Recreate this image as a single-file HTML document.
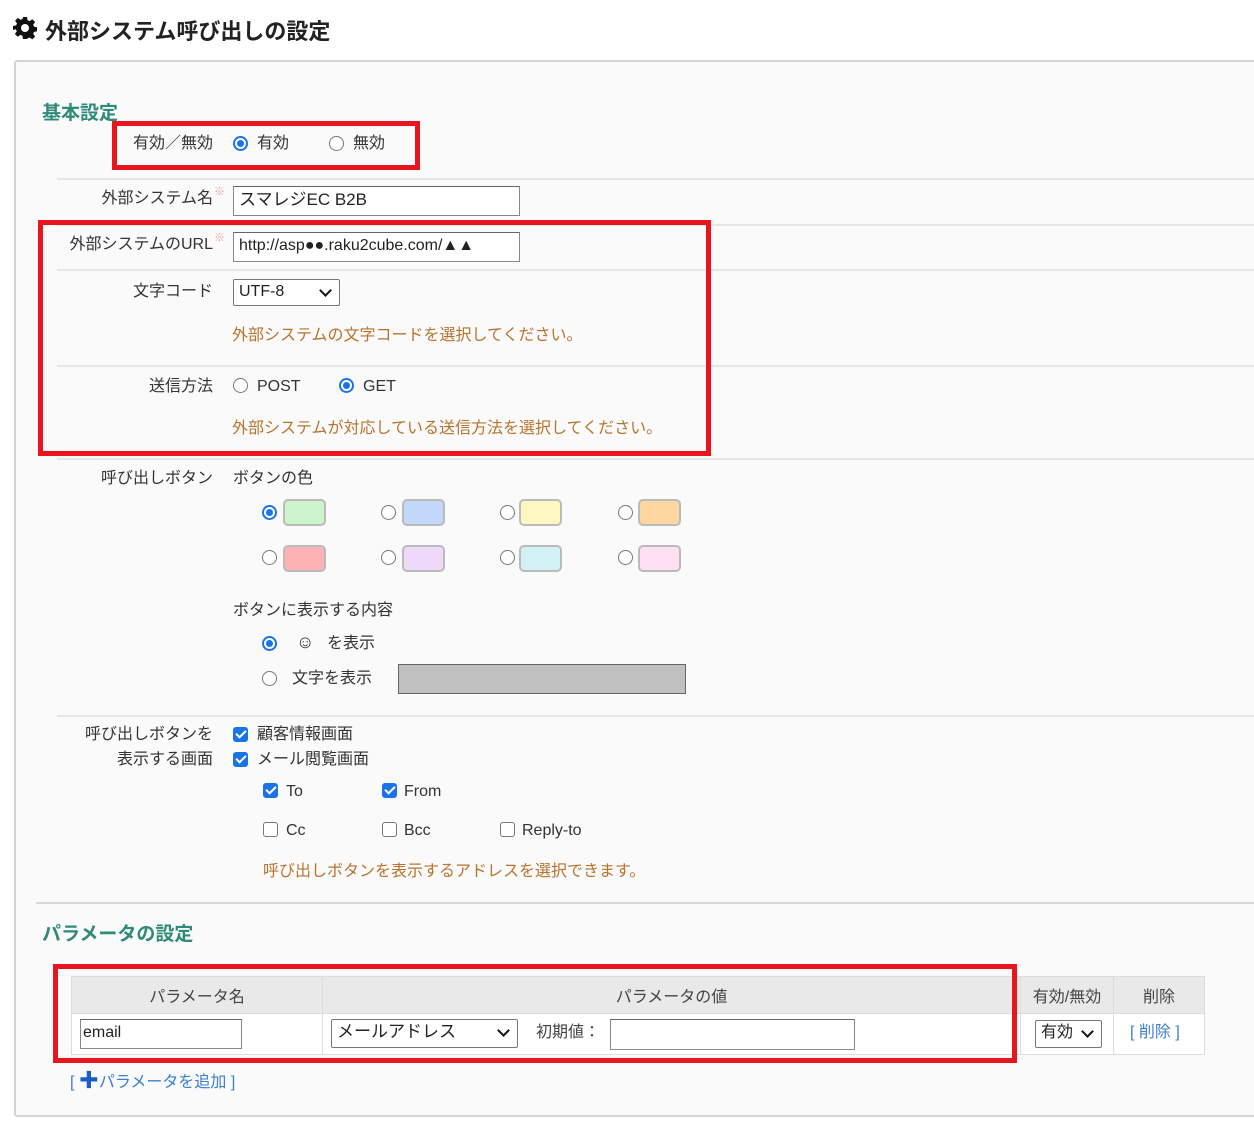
<!DOCTYPE html>
<html><head><meta charset="utf-8"><style>
*{box-sizing:border-box}
body{margin:0;width:1254px;height:1125px;background:#fff;font-family:"Liberation Sans","Noto Sans CJK JP",sans-serif;color:#333;position:relative;overflow:hidden}
.a{position:absolute;white-space:nowrap}
.t{font-size:16px;line-height:20px}
.lb{font-size:16px;line-height:20px;text-align:right;width:200px}
.hr{position:absolute;height:2px;background:#e6e6e6;left:57px;right:0}
.red{position:absolute;border:5px solid #e8141e}
.rad{position:absolute;width:15px;height:15px;border:1.5px solid #777;border-radius:50%;background:#fff}
.rad.on{border:2px solid #1a73e8}
.rad.on:after{content:"";position:absolute;left:2px;top:2px;width:7px;height:7px;border-radius:50%;background:#1a73e8}
.cb{position:absolute;width:15px;height:15px;border:1.5px solid #777;border-radius:3px;background:#fff}
.cb.on{background:#1a73e8;border-color:#1a73e8}
.cb.on:after{content:"";position:absolute;left:4px;top:0px;width:4px;height:8px;border:solid #fff;border-width:0 2px 2px 0;transform:rotate(45deg)}
.inp{position:absolute;background:#fff;border:1px solid #888;border-top-color:#666;font-size:17px;line-height:26px;padding-left:5px;color:#222}
.sel{position:absolute;background:#fff;border:1px solid #777;border-radius:2px;font-size:16px;line-height:24px;padding-left:5px;color:#222}
.sel:after{content:"";position:absolute;right:9px;top:6px;width:7px;height:7px;border:solid #111;border-width:0 2.5px 2.5px 0;transform:rotate(45deg)}
.sw{position:absolute;width:43px;height:27px;border:2px solid #bbb;border-radius:5px}
.or{color:#b8742e;font-size:16px}
.h2{color:#2e8b7a;font-weight:bold;font-size:19px}
table{position:absolute;border-collapse:collapse;left:71px;top:976px}
td,th{border:1px solid #dcdcdc;padding:0;font-size:16px;font-weight:normal;color:#444}
th{background:#e9e9e9;height:37px}
td{height:41px;background:#fff;position:relative}
.bl{color:#3b7fd0}
</style></head><body>
<svg class="a" style="left:13px;top:16px" width="24" height="24" viewBox="0 0 24 24"><path fill="#111" d="M10 1h4l.6 3.2 2 .9 2.7-1.9 2.8 2.8-1.9 2.7.9 2 3.2.6v4l-3.2.6-.9 2 1.9 2.7-2.8 2.8-2.7-1.9-2 .9L14 23h-4l-.6-3.2-2-.9-2.7 1.9-2.8-2.8 1.9-2.7-.9-2L-.1 14v-4l3.2-.6.9-2L2.1 4.7l2.8-2.8 2.7 1.9 2-.9z"/><circle cx="12" cy="12" r="4" fill="#fff"/></svg>
<div class="a" style="left:45px;top:14px;font-size:22px;font-weight:bold;color:#222">外部システム呼び出しの設定</div>

<div class="a" style="left:14px;top:60px;width:1250px;height:1057px;border:2px solid #d4d4d4;border-right:none;background:#fafafa;border-radius:3px"></div>

<div class="a h2" style="left:42px;top:98px">基本設定</div>
<div class="a lb" style="left:13px;top:134px">有効／無効</div>
<div class="rad on" style="left:233px;top:136px"></div><div class="a t" style="left:257px;top:134px">有効</div>
<div class="rad" style="left:329px;top:136px"></div><div class="a t" style="left:353px;top:134px">無効</div>
<div class="red" style="left:112px;top:121px;width:308px;height:49px"></div>

<div class="hr" style="top:178px"></div>
<div class="a lb" style="left:13px;top:189px">外部システム名</div><div class="a" style="left:214px;top:183px;font-size:11px;color:#e8a0a0">※</div>
<div class="inp" style="left:233px;top:186px;width:287px;height:30px">スマレジEC B2B</div>

<div class="hr" style="top:224px"></div>
<div class="a lb" style="left:13px;top:235px">外部システムのURL</div><div class="a" style="left:214px;top:229px;font-size:11px;color:#e8a0a0">※</div>
<div class="inp" style="left:233px;top:232px;width:287px;height:30px;overflow:hidden;font-size:16px">http://asp●●.raku2cube.com/▲▲</div>

<div class="hr" style="top:269px"></div>
<div class="a lb" style="left:13px;top:282px">文字コード</div>
<div class="sel" style="left:233px;top:279px;width:107px;height:27px">UTF-8</div>
<div class="a or" style="left:232px;top:321px">外部システムの文字コードを選択してください。</div>

<div class="hr" style="top:365px"></div>
<div class="a lb" style="left:13px;top:377px">送信方法</div>
<div class="rad" style="left:233px;top:378px"></div><div class="a t" style="left:257px;top:377px">POST</div>
<div class="rad on" style="left:339px;top:378px"></div><div class="a t" style="left:363px;top:377px">GET</div>
<div class="a or" style="left:232px;top:414px">外部システムが対応している送信方法を選択してください。</div>
<div class="red" style="left:38px;top:220px;width:673px;height:236px"></div>

<div class="hr" style="top:458px"></div>
<div class="a lb" style="left:13px;top:469px">呼び出しボタン</div>
<div class="a t" style="left:233px;top:469px">ボタンの色</div>
<div class="rad on" style="left:262px;top:505px"></div><div class="sw" style="left:283px;top:499px;background:#ccf5cc"></div>
<div class="rad" style="left:381px;top:505px"></div><div class="sw" style="left:402px;top:499px;background:#c2d8fb"></div>
<div class="rad" style="left:500px;top:505px"></div><div class="sw" style="left:519px;top:499px;background:#fff7c2"></div>
<div class="rad" style="left:618px;top:505px"></div><div class="sw" style="left:638px;top:499px;background:#fdd6a0"></div>
<div class="rad" style="left:262px;top:550px"></div><div class="sw" style="left:283px;top:545px;background:#fdb3b3"></div>
<div class="rad" style="left:381px;top:550px"></div><div class="sw" style="left:402px;top:545px;background:#eed9fb"></div>
<div class="rad" style="left:500px;top:550px"></div><div class="sw" style="left:519px;top:545px;background:#d2f1f7"></div>
<div class="rad" style="left:618px;top:550px"></div><div class="sw" style="left:638px;top:545px;background:#fde0f2"></div>

<div class="a t" style="left:233px;top:601px">ボタンに表示する内容</div>
<div class="rad on" style="left:262px;top:636px"></div><div class="a t" style="left:296px;top:632px;font-size:18px;font-weight:bold">☺</div><div class="a t" style="left:327px;top:634px">を表示</div>
<div class="rad" style="left:262px;top:671px"></div><div class="a t" style="left:292px;top:669px">文字を表示</div>
<div class="a" style="left:398px;top:664px;width:288px;height:30px;background:#c0c0c0;border:1.5px solid #666"></div>

<div class="hr" style="top:715px"></div>
<div class="a lb" style="left:13px;top:725px">呼び出しボタンを</div>
<div class="a lb" style="left:13px;top:750px">表示する画面</div>
<div class="cb on" style="left:233px;top:727px"></div><div class="a t" style="left:257px;top:725px">顧客情報画面</div>
<div class="cb on" style="left:233px;top:752px"></div><div class="a t" style="left:257px;top:750px">メール閲覧画面</div>
<div class="cb on" style="left:263px;top:783px"></div><div class="a t" style="left:286px;top:782px">To</div>
<div class="cb on" style="left:382px;top:783px"></div><div class="a t" style="left:404px;top:782px">From</div>
<div class="cb" style="left:263px;top:822px"></div><div class="a t" style="left:286px;top:821px">Cc</div>
<div class="cb" style="left:382px;top:822px"></div><div class="a t" style="left:404px;top:821px">Bcc</div>
<div class="cb" style="left:500px;top:822px"></div><div class="a t" style="left:522px;top:821px">Reply-to</div>
<div class="a or" style="left:263px;top:857px">呼び出しボタンを表示するアドレスを選択できます。</div>

<div class="hr" style="top:902px;left:36px;background:#d8d8d8"></div>
<div class="a h2" style="left:42px;top:919px">パラメータの設定</div>

<table>
<tr><th style="width:251px">パラメータ名</th><th style="width:698px">パラメータの値</th><th style="width:93px">有効/無効</th><th style="width:91px">削除</th></tr>
<tr><td><div class="inp" style="left:8px;top:5px;width:162px;height:30px;font-size:16px;padding-left:2px">email</div></td>
<td><div class="sel" style="left:8px;top:5px;width:187px;height:29px;font-size:17px">メールアドレス</div><div class="a t" style="left:213px;top:9px">初期値：</div><div class="inp" style="left:287px;top:5px;width:245px;height:31px"></div></td>
<td><div class="sel" style="left:14px;top:6px;width:67px;height:28px">有効</div></td>
<td><div class="a t bl" style="left:16px;top:9px">[ 削除 ]</div></td></tr>
</table>
<div class="red" style="left:53px;top:964px;width:964px;height:99px"></div>

<div class="a t bl" style="left:70px;top:1071px">[ <span style="color:#1a5fc8;font-weight:bold;font-size:20px">✚</span>パラメータを追加 ]</div>
</body></html>
